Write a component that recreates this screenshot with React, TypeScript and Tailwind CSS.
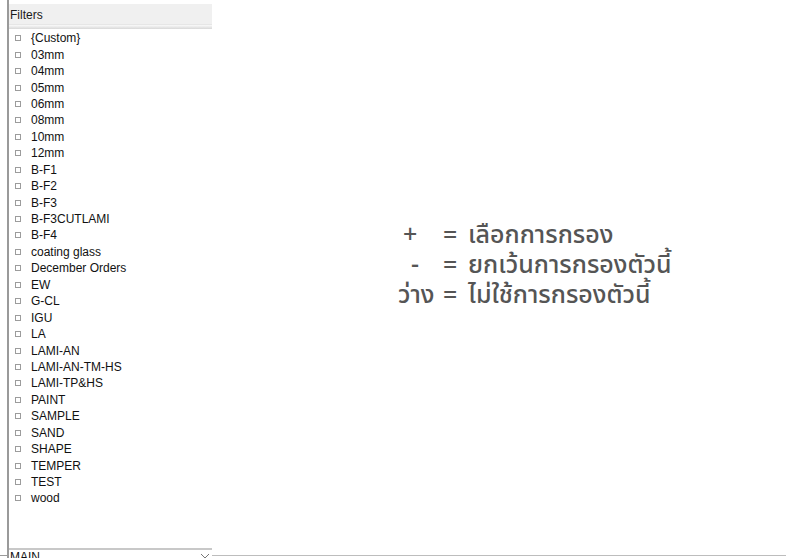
import React from "react";

const FILTERS = [
  "{Custom}",
  "03mm",
  "04mm",
  "05mm",
  "06mm",
  "08mm",
  "10mm",
  "12mm",
  "B-F1",
  "B-F2",
  "B-F3",
  "B-F3CUTLAMI",
  "B-F4",
  "coating glass",
  "December Orders",
  "EW",
  "G-CL",
  "IGU",
  "LA",
  "LAMI-AN",
  "LAMI-AN-TM-HS",
  "LAMI-TP&HS",
  "PAINT",
  "SAMPLE",
  "SAND",
  "SHAPE",
  "TEMPER",
  "TEST",
  "wood",
];

const LEGEND = [
  { key: "+", pad: "pl-[5px]", text: "เลือกการกรอง" },
  { key: "-", pad: "pl-[13px]", text: "ยกเว้นการกรองตัวนี้" },
  { key: "ว่าง", pad: "", text: "ไม่ใช้การกรองตัวนี้" },
];

export default function App() {
  return (
    <div className="w-[786px] h-[558px] bg-white flex overflow-hidden font-['Liberation_Sans',Arial,sans-serif] relative">
      {/* Filter panel */}
      <div className="ml-[7px] w-[205px] h-full border-l-2 border-[#9a9a9a] flex flex-col">
        <div className="mt-[4px] h-[20px] bg-[#f0f0f0] flex items-center pl-[1px] pt-[2px] text-[12px] text-[#1a1a1a]">
          Filters
        </div>
        <div className="h-[5px] bg-gradient-to-b from-[#fafafa] to-[#d8d8d8] border-t border-[#e6e6e6]" />
        <div className="flex-1 flex flex-col pt-[1px]">
          {FILTERS.map((f) => (
            <div key={f} className="h-[16.45px] flex items-center text-[12px] text-[#111] leading-none">
              <span className="ml-[6px] w-[6px] h-[6px] border border-[#9c9c9c] bg-white shrink-0" />
              <span className="ml-[10px] whitespace-nowrap">{f}</span>
            </div>
          ))}
        </div>
        <div className="border-t-2 border-[#c8c8c8] h-[10px] flex items-start pt-[1px] pl-[1px] text-[12px] text-[#111] leading-none relative">
          MAIN
          <svg className="absolute right-[2px] top-[3px]" width="10" height="6" viewBox="0 0 10 6">
            <path d="M1 1 L5 5 L9 1" fill="none" stroke="#777" strokeWidth="1" />
          </svg>
        </div>
      </div>
      <div className="absolute left-0 bottom-[2px] w-[7px] h-px bg-[#9a9a9a]" />
      <div className="absolute left-[212px] right-0 bottom-[2px] h-px bg-[#bdbdbd]" />

      {/* Legend */}
      <div className="flex-1 flex items-start pt-[218px] pl-[186px] text-[#555] text-[25px] leading-[30px] font-medium font-['Noto_Sans','Noto_Sans_Thai',Tahoma,sans-serif]">
        <div className="grid grid-cols-[43px_27px_auto]">
          {LEGEND.map((l) => (
            <React.Fragment key={l.key}>
              <span className={l.pad}>{l.key}</span>
              <span className="pl-[2px]">=</span>
              <span>{l.text}</span>
            </React.Fragment>
          ))}
        </div>
      </div>
    </div>
  );
}
